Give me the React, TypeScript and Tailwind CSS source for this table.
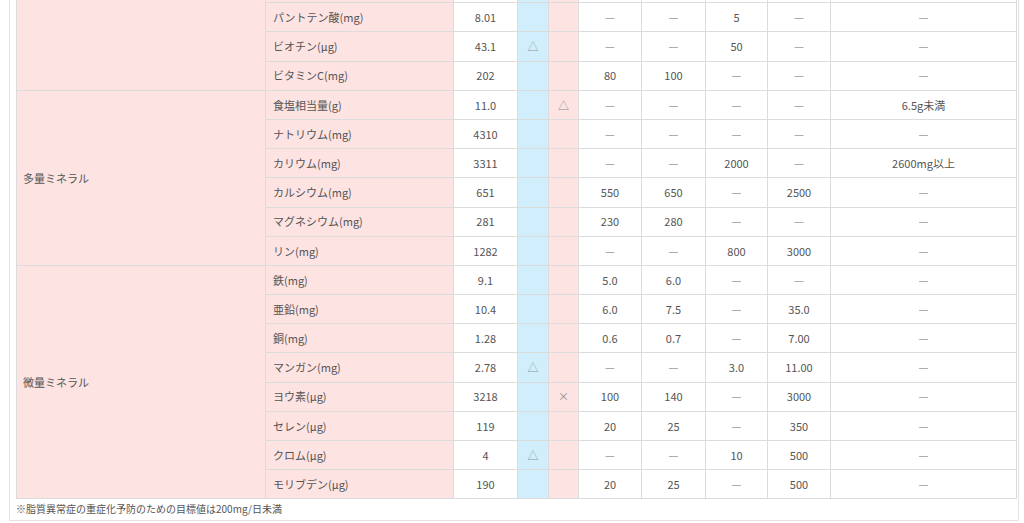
import React from 'react';

type Row = [string, string, string, string, string, string, string, string, string];

const groups: { label: string; rows: Row[] }[] = [
  {
    label: '',
    rows: [
      ['', '', '', '', '', '', '', '', ''],
      ['パントテン酸(mg)', '8.01', '', '', '—', '—', '5', '—', '—'],
      ['ビオチン(μg)', '43.1', '△', '', '—', '—', '50', '—', '—'],
      ['ビタミンC(mg)', '202', '', '', '80', '100', '—', '—', '—'],
    ],
  },
  {
    label: '多量ミネラル',
    rows: [
      ['食塩相当量(g)', '11.0', '', '△', '—', '—', '—', '—', '6.5g未満'],
      ['ナトリウム(mg)', '4310', '', '', '—', '—', '—', '—', '—'],
      ['カリウム(mg)', '3311', '', '', '—', '—', '2000', '—', '2600mg以上'],
      ['カルシウム(mg)', '651', '', '', '550', '650', '—', '2500', '—'],
      ['マグネシウム(mg)', '281', '', '', '230', '280', '—', '—', '—'],
      ['リン(mg)', '1282', '', '', '—', '—', '800', '3000', '—'],
    ],
  },
  {
    label: '微量ミネラル',
    rows: [
      ['鉄(mg)', '9.1', '', '', '5.0', '6.0', '—', '—', '—'],
      ['亜鉛(mg)', '10.4', '', '', '6.0', '7.5', '—', '35.0', '—'],
      ['銅(mg)', '1.28', '', '', '0.6', '0.7', '—', '7.00', '—'],
      ['マンガン(mg)', '2.78', '△', '', '—', '—', '3.0', '11.00', '—'],
      ['ヨウ素(μg)', '3218', '', '×', '100', '140', '—', '3000', '—'],
      ['セレン(μg)', '119', '', '', '20', '25', '—', '350', '—'],
      ['クロム(μg)', '4', '△', '', '—', '—', '10', '500', '—'],
      ['モリブデン(μg)', '190', '', '', '20', '25', '—', '500', '—'],
    ],
  },
];

const cell = 'border border-[#dcdcdc] text-center align-middle';

const Val = ({ v }: { v: string }) => (
  <span className={v === '—' ? 'text-[#9a9a9a]' : ''}>{v}</span>
);

const App = () => {
  return (
    <div
      className="h-[523px] w-[1024px] overflow-hidden bg-white text-[11px] text-[#555]"
      style={{ fontFamily: '"Noto Sans CJK JP", "Noto Sans", sans-serif' }}
    >
      <div className="-mt-[28px] ml-[9px] mr-[5px] border border-[#e4e4e4] pl-[6px] pr-[1px] pb-[3px]">
        <table className="w-[1000px] table-fixed border-collapse">
          <colgroup>
            <col className="w-[249px]" />
            <col className="w-[188px]" />
            <col className="w-[64px]" />
            <col className="w-[31px]" />
            <col className="w-[30px]" />
            <col className="w-[63px]" />
            <col className="w-[64px]" />
            <col className="w-[62px]" />
            <col className="w-[63px]" />
            <col className="w-[186px]" />
          </colgroup>
          <tbody>
            {groups.map((g, gi) =>
              g.rows.map((r, i) => (
                <tr key={`${gi}-${i}`} className="h-[29.2px]">
                  {i === 0 && (
                    <td
                      rowSpan={g.rows.length}
                      className="border border-[#dcdcdc] bg-[#fde3e2] pl-[6px] align-middle"
                    >
                      {g.label}
                    </td>
                  )}
                  <td className="border border-[#dcdcdc] bg-[#fde3e2] pl-[7px] align-middle">{r[0]}</td>
                  <td className={cell}>{r[1]}</td>
                  <td className={`${cell} bg-[#d0eefb] text-[#8a9aa4]`}>{r[2]}</td>
                  <td className={`${cell} bg-[#fde3e2] text-[#8a8a8a]`}>{r[3]}</td>
                  {r.slice(4).map((v, k) => (
                    <td key={k} className={cell}>
                      <Val v={v} />
                    </td>
                  ))}
                </tr>
              ))
            )}
          </tbody>
        </table>
        <p className="mt-[2px] text-[10px] leading-[16px]">※脂質異常症の重症化予防のための目標値は200mg/日未満</p>
      </div>
    </div>
  );
};

export default App;
